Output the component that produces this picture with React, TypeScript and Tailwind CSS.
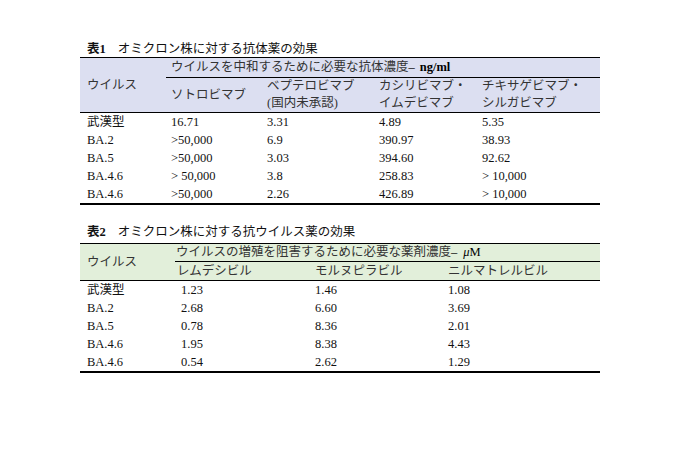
import React from "react";

const font = "font-['Liberation_Serif','Noto_Sans_CJK_JP',serif]";

type Row = string[];

const t1Rows: Row[] = [
  ["武漢型", "16.71", "3.31", "4.89", "5.35"],
  ["BA.2", ">50,000", "6.9", "390.97", "38.93"],
  ["BA.5", ">50,000", "3.03", "394.60", "92.62"],
  ["BA.4.6", "> 50,000", "3.8", "258.83", "> 10,000"],
  ["BA.4.6", ">50,000", "2.26", "426.89", "> 10,000"],
];

const t2Rows: Row[] = [
  ["武漢型", "1.23", "1.46", "1.08"],
  ["BA.2", "2.68", "6.60", "3.69"],
  ["BA.5", "0.78", "8.36", "2.01"],
  ["BA.4.6", "1.95", "8.38", "4.43"],
  ["BA.4.6", "0.54", "2.62", "1.29"],
];

function Title({ n, text }: { n: string; text: string }) {
  return (
    <div className="h-[16px] leading-[16px] text-[12.5px] text-[#111] pl-[7px] flex">
      <span className="font-bold">表{n}</span>
      <span className="ml-[12px]">{text}</span>
    </div>
  );
}

export default function App() {
  return (
    <div className={`${font} w-[675px] h-[450px] bg-white text-[12.5px] text-[#111] pt-[41px] pl-[80px]`}>
      <Title n="1" text="オミクロン株に対する抗体薬の効果" />
      <div className="w-[520px]">
        <div className="grid grid-cols-[86px_96px_112px_103px_123px] bg-[#dcdff1] border-t border-b border-black">
          <div className="row-span-2 flex items-center pl-[7px] text-[#333]">ウイルス</div>
          <div className="col-span-4 h-[20px] border-b border-black pl-[5px] flex items-center text-[#333]">
            ウイルスを中和するために必要な抗体濃度<span className="text-black">–</span>
            <span className="ml-[5px] font-bold text-black">ng/ml</span>
          </div>
          <div className="h-[34px] pl-[5px] flex items-center text-[#333]">ソトロビマブ</div>
          <div className="h-[34px] pl-[5px] flex flex-col justify-center leading-[17px] text-[#333]">
            <span>ベプテロビマブ</span>
            <span>(国内未承認)</span>
          </div>
          <div className="h-[34px] pl-[5px] flex flex-col justify-center leading-[17px] text-[#333]">
            <span>カシリビマブ・</span>
            <span>イムデビマブ</span>
          </div>
          <div className="h-[34px] pl-[5px] flex flex-col justify-center leading-[17px] text-[#333]">
            <span>チキサゲビマブ・</span>
            <span>シルガビマブ</span>
          </div>
        </div>
        <div className="border-b-2 border-black">
          {t1Rows.map((r, i) => (
            <div key={i} className="grid grid-cols-[86px_96px_112px_103px_123px] h-[18px] items-center">
              <div className="pl-[7px]">{r[0]}</div>
              <div className="pl-[5px]">{r[1]}</div>
              <div className="pl-[5px]">{r[2]}</div>
              <div className="pl-[5px]">{r[3]}</div>
              <div className="pl-[5px]">{r[4]}</div>
            </div>
          ))}
        </div>
      </div>

      <div className="mt-[19px]">
        <Title n="2" text="オミクロン株に対する抗ウイルス薬の効果" />
      </div>
      <div className="w-[520px] mt-[3px]">
        <div className="grid grid-cols-[95px_135px_133px_157px] bg-[#e2efda] border-t border-b border-black">
          <div className="row-span-2 flex items-center pl-[7px] text-[#333]">ウイルス</div>
          <div className="col-span-3 h-[18px] border-b border-black pl-[1px] flex items-center text-[#333]">
            ウイルスの増殖を阻害するために必要な薬剤濃度<span className="text-black">–</span>
            <span className="ml-[6px] text-black">
              <span className="italic">μ</span>M
            </span>
          </div>
          <div className="h-[18px] pl-[2px] flex items-center text-[#333]">レムデシビル</div>
          <div className="h-[18px] pl-[5px] flex items-center text-[#333]">モルヌピラビル</div>
          <div className="h-[18px] pl-[5px] flex items-center text-[#333]">ニルマトレルビル</div>
        </div>
        <div className="border-b-2 border-black">
          {t2Rows.map((r, i) => (
            <div key={i} className="grid grid-cols-[95px_135px_133px_157px] h-[18px] items-center">
              <div className="pl-[7px]">{r[0]}</div>
              <div className="pl-[6px]">{r[1]}</div>
              <div className="pl-[5px]">{r[2]}</div>
              <div className="pl-[5px]">{r[3]}</div>
            </div>
          ))}
        </div>
      </div>
    </div>
  );
}
